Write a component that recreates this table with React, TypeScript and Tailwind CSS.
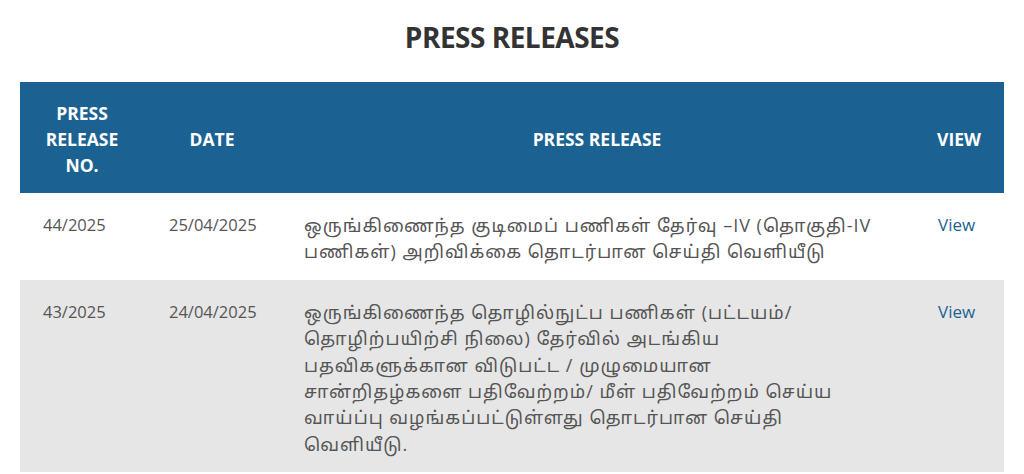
import React from "react";

const rows = [
  {
    no: "44/2025",
    date: "25/04/2025",
    lines: [
      "ஒருங்கிணைந்த குடிமைப் பணிகள் தேர்வு –IV (தொகுதி-IV",
      "பணிகள்) அறிவிக்கை தொடர்பான செய்தி வெளியீடு",
    ],
    bg: "bg-white",
  },
  {
    no: "43/2025",
    date: "24/04/2025",
    lines: [
      "ஒருங்கிணைந்த தொழில்நுட்ப பணிகள் (பட்டயம்/",
      "தொழிற்பயிற்சி நிலை) தேர்வில் அடங்கிய",
      "பதவிகளுக்கான விடுபட்ட / முழுமையான",
      "சான்றிதழ்களை பதிவேற்றம்/ மீள் பதிவேற்றம் செய்ய",
      "வாய்ப்பு வழங்கப்பட்டுள்ளது தொடர்பான செய்தி",
      "வெளியீடு.",
    ],
    bg: "bg-[#e6e6e6]",
  },
];

export default function App() {
  return (
    <div
      className="w-[1024px] h-[474px] bg-white overflow-hidden"
      style={{ fontFamily: '"Open Sans", "Noto Sans Tamil", "Noto Sans", sans-serif' }}
    >
      <h1 className="text-center text-[28px] font-bold text-[#333333] pt-[18px] h-[82px] leading-[38px] tracking-[-0.5px]">
        PRESS RELEASES
      </h1>
      <div className="mx-[20px] w-[984px]">
        <div className="grid grid-cols-[124px_136px_634px_90px] bg-[#1b6293] text-white font-bold text-[17.5px] leading-[26px] h-[111px] items-center pt-[2px]">
          <div className="text-center px-2">
            PRESS
            <br />
            RELEASE
            <br />
            NO.
          </div>
          <div className="text-center px-2">DATE</div>
          <div className="text-center px-2">PRESS RELEASE</div>
          <div className="text-center px-1">VIEW</div>
        </div>
        {rows.map((r) => (
          <div
            key={r.no}
            className={`grid grid-cols-[124px_136px_634px_90px] ${r.bg} text-[#555555] text-[16.5px] leading-[26.4px] pt-[19px] pb-[15px]`}
          >
            <div className="pl-[23px]">{r.no}</div>
            <div className="pl-[25px]">{r.date}</div>
            <div className="pl-[24px] text-[18px] tracking-[1px]">
              {r.lines.map((l, i) => (
                <div key={i} className="whitespace-nowrap">
                  {l}
                </div>
              ))}
            </div>
            <div className="pl-[24px] text-[#1b6293] text-[17px]">View</div>
          </div>
        ))}
      </div>
    </div>
  );
}
